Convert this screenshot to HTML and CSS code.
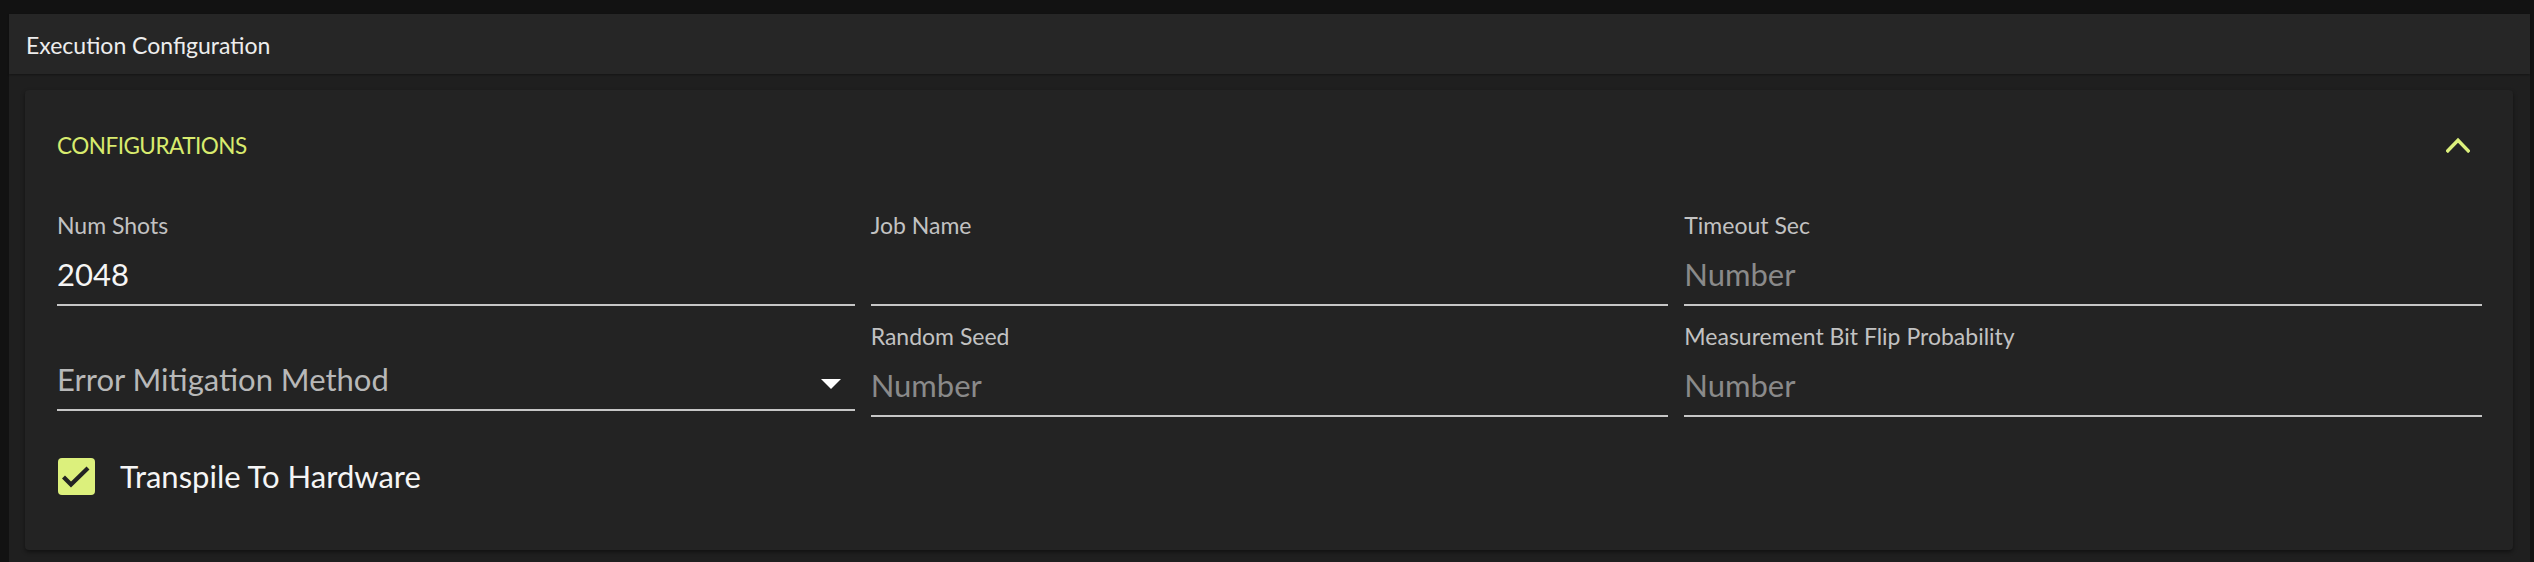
FILE: index.html
```html
<!DOCTYPE html>
<html lang="en">
<head>
<meta charset="utf-8">
<title>Execution Configuration</title>
<link rel="stylesheet" href="styles.css">
</head>
<body>
<section class="panel">
  <header class="panel-header">Execution Configuration</header>
  <div class="panel-body">
    <div class="card">
      <div class="card-head">
        <span class="card-title">CONFIGURATIONS</span>
        <svg class="chevron" viewBox="0 0 24 16" aria-hidden="true"><polyline points="1.8,13.8 12,3.2 22.2,13.8" fill="none" stroke="#dcf07c" stroke-width="3.4" stroke-linecap="square"/></svg>
      </div>
      <div class="grid">
        <div class="field">
          <span class="field-label">Num Shots</span>
          <span class="field-input value">2048</span>
        </div>
        <div class="field">
          <span class="field-label">Job Name</span>
          <span class="field-input"></span>
        </div>
        <div class="field">
          <span class="field-label">Timeout Sec</span>
          <span class="field-input placeholder">Number</span>
        </div>
        <div class="select">
          <span class="select-input">
            <span class="select-text">Error Mitigation Method</span>
            <svg class="select-arrow" viewBox="0 0 20 10" aria-hidden="true"><polygon points="0,0 20,0 10,10" fill="#ffffff"/></svg>
          </span>
        </div>
        <div class="field">
          <span class="field-label">Random Seed</span>
          <span class="field-input placeholder">Number</span>
        </div>
        <div class="field">
          <span class="field-label">Measurement Bit Flip Probability</span>
          <span class="field-input placeholder">Number</span>
        </div>
      </div>
      <div class="check-row">
        <span class="checkbox"><svg viewBox="0 0 37 37" aria-hidden="true"><polyline points="5.5,19 13,26.5 30,10" fill="none" stroke="#232323" stroke-width="4.2"/></svg></span>
        <span class="check-label">Transpile To Hardware</span>
      </div>
    </div>
  </div>
</section>
</body>
</html>
```
FILE: styles.css
```css
* { box-sizing: border-box; }
html, body { margin: 0; background: #121212; }
body { font-family: Lato, "Noto Sans", sans-serif; overflow: hidden; height: 562px; }

.panel { margin: 14px 4px 0 9px; background: #1f1f1f; }
.panel-header {
  height: 60px; background: #262626; display: flex; align-items: center;
  padding-left: 17px; padding-top: 1px; color: #ededed; font-size: 23px;
  box-shadow: 0 1px 2px rgba(0,0,0,0.35);
}
.panel-body { padding: 16px 17px 16px 16px; }

.card {
  background: #232323; border-radius: 4px;
  box-shadow: 0 2px 4px rgba(0,0,0,0.45);
  padding: 0 31px 56px 32px;
}
.card-head { height: 110px; display: flex; align-items: center; justify-content: space-between; }
.card-title { color: #d8eb6e; font-size: 22.5px; letter-spacing: -0.5px; }
.chevron { width: 24px; height: 16px; margin-right: 12px; display: block; }

.grid {
  display: grid; grid-template-columns: repeat(3, 1fr);
  column-gap: 16px; row-gap: 17px; padding-top: 12px; align-items: start;
}
.field { display: flex; flex-direction: column; }
.field-label { font-size: 23px; line-height: 26px; height: 26px; color: #c2c2c2; white-space: nowrap; }
.field-input {
  margin-top: 16px; font-size: 31px; line-height: 40px; height: 52px;
  padding-bottom: 10px; border-bottom: 2px solid #c6c6c6; color: #f5f5f5;
}
.field-input.placeholder { color: #8a8a8a; }

.select { display: flex; flex-direction: column; }
.select-input {
  margin-top: 36px; height: 52px; padding-bottom: 10px;
  border-bottom: 2px solid #c6c6c6;
  display: flex; align-items: center; justify-content: space-between;
  font-size: 31px; line-height: 40px; color: #b8b8b8;
}
.select-arrow { width: 20px; height: 10px; margin-right: 14px; margin-top: 10px; display: block; }

.check-row { margin-top: 41px; display: flex; align-items: center; height: 36px; }
.checkbox {
  width: 37px; height: 37px; margin-left: 1px; border-radius: 4px;
  background: #dcf07c; display: flex;
}
.checkbox svg { width: 37px; height: 37px; display: block; }
.check-label { margin-left: 25px; font-size: 31px; line-height: 36px; color: #f5f5f5; }
```
